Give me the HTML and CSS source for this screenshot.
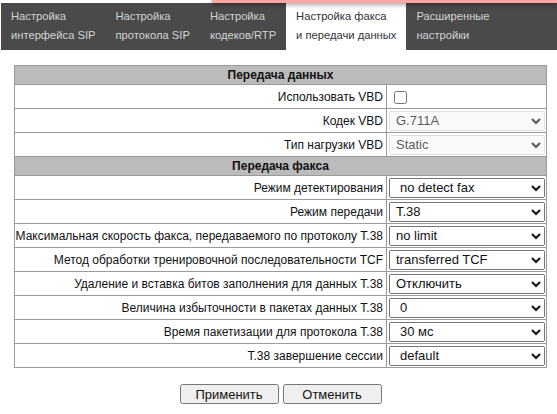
FILE: index.html
```html
<!DOCTYPE html>
<html lang="ru">
<head>
<meta charset="utf-8">
<title>Настройка факса и передачи данных</title>
<link rel="stylesheet" href="styles.css">
</head>
<body>
<div class="popup-edge"></div>
<nav class="tabs">
  <div class="tab">Настройка<br>интерфейса SIP</div>
  <div class="tab">Настройка<br>протокола SIP</div>
  <div class="tab">Настройка<br>кодеков/RTP</div>
  <div class="tab active">Настройка факса<br>и передачи данных</div>
  <div class="tab">Расширенные<br>настройки</div>
</nav>
<main class="content">
  <table class="form">
    <tr class="head"><td colspan="2">Передача данных</td></tr>
    <tr><td class="label">Использовать VBD</td><td class="value"><input type="checkbox" class="check"></td></tr>
    <tr><td class="label">Кодек VBD</td><td class="value"><select class="sel" disabled><option>G.711A</option></select></td></tr>
    <tr><td class="label">Тип нагрузки VBD</td><td class="value"><select class="sel" disabled><option>Static</option></select></td></tr>
    <tr class="head"><td colspan="2">Передача факса</td></tr>
    <tr><td class="label">Режим детектирования</td><td class="value"><select class="sel wide-pad"><option>no detect fax</option></select></td></tr>
    <tr><td class="label">Режим передачи</td><td class="value"><select class="sel"><option>T.38</option></select></td></tr>
    <tr><td class="label">Максимальная скорость факса, передаваемого по протоколу T.38</td><td class="value"><select class="sel"><option>no limit</option></select></td></tr>
    <tr><td class="label">Метод обработки тренировочной последовательности TCF</td><td class="value"><select class="sel"><option>transferred TCF</option></select></td></tr>
    <tr><td class="label">Удаление и вставка битов заполнения для данных T.38</td><td class="value"><select class="sel"><option>Отключить</option></select></td></tr>
    <tr><td class="label">Величина избыточности в пакетах данных T.38</td><td class="value"><select class="sel wide-pad"><option>0</option></select></td></tr>
    <tr><td class="label">Время пакетизации для протокола T.38</td><td class="value"><select class="sel wide-pad"><option>30 мс</option></select></td></tr>
    <tr><td class="label">T.38 завершение сессии</td><td class="value"><select class="sel wide-pad"><option>default</option></select></td></tr>
  </table>
  <div class="actions">
    <button class="btn" type="button">Применить</button>
    <button class="btn" type="button">Отменить</button>
  </div>
</main>
</body>
</html>
```
FILE: styles.css
```css
html, body {
  margin: 0;
  padding: 0;
  background: #ffffff;
}
body {
  font-family: "Liberation Sans", Arial, sans-serif;
  color: #111;
  padding-top: 3px;
  position: relative;
}
.popup-edge {
  position: absolute;
  top: 0;
  left: 212px;
  right: 0;
  height: 3px;
  background: #f5a9a9;
  box-shadow: 0 1px 5px rgba(0, 0, 0, 0.6);
  z-index: 2;
}
.tabs {
  display: flex;
  margin-left: 1px;
  background: #4a4a4a;
  height: 47px;
}
.tab {
  padding: 4px 10px 0 10px;
  font-size: 11.2px;
  line-height: 19px;
  color: #d4d4d4;
  white-space: nowrap;
}
.tab.active {
  background: #ffffff;
  color: #333333;
}
.content {
  padding: 15px 10px 0 14px;
}
.form {
  width: 533px;
  border-collapse: collapse;
  border: 1px solid #9a9a9a;
  font-size: 12px;
}
.form td {
  border: 1px solid #9a9a9a;
  padding: 0;
}
.head td {
  background: #bbbbbb;
  height: 18px;
  text-align: center;
  font-weight: bold;
  color: #111;
}
.label {
  height: 23px;
  text-align: right;
  padding-right: 3px !important;
  color: #111;
  white-space: nowrap;
}
.value {
  width: 157px;
  padding-left: 2px !important;
}
.check {
  margin: 3px 3px 1px 5px;
  width: 13px;
  height: 13px;
  vertical-align: middle;
}
.sel {
  display: block;
  width: 156px;
  height: 20px;
  font-family: "Liberation Sans", Arial, sans-serif;
  font-size: 13px;
  color: #111;
  padding: 0 0 0 2px;
  margin: 0;
}
.sel.wide-pad {
  padding-left: 6px;
}
.actions {
  display: flex;
  justify-content: center;
  gap: 4px;
  margin-top: 16px;
}
.btn {
  width: 99px;
  height: 20px;
  font-family: "Liberation Sans", Arial, sans-serif;
  font-size: 13px;
  color: #111;
  padding: 0;
}
```
